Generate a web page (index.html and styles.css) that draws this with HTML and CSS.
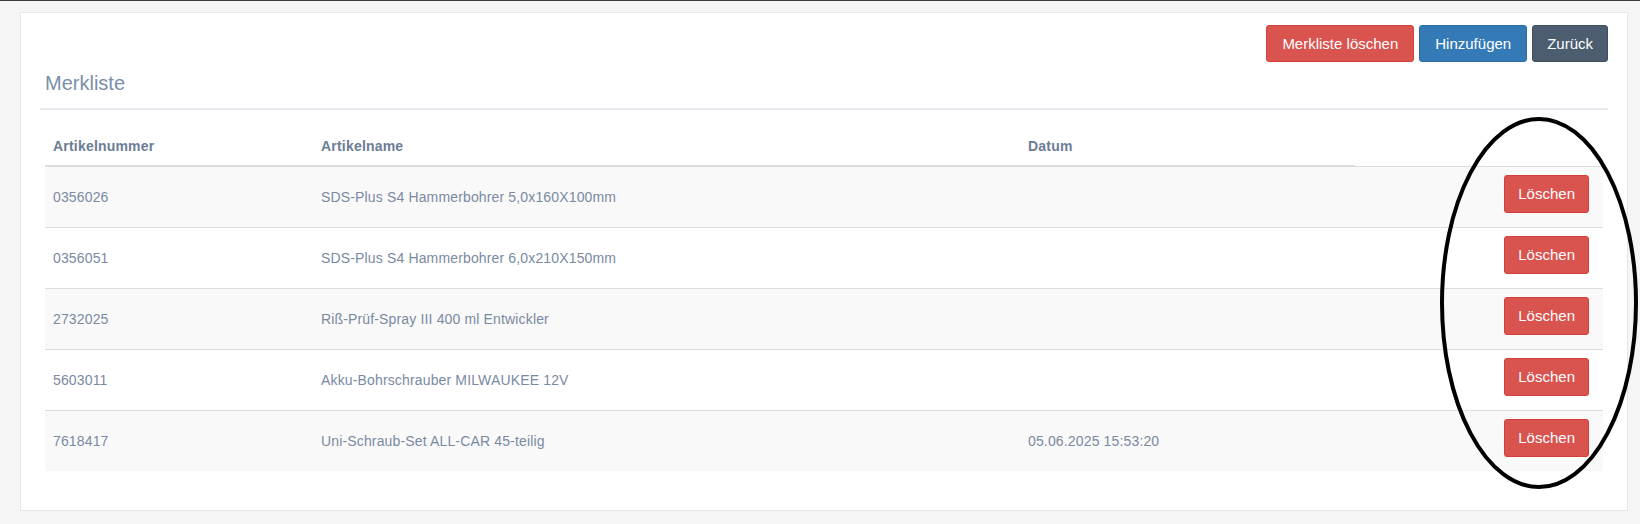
FILE: index.html
```html
<!DOCTYPE html>
<html lang="de">
<head>
<meta charset="utf-8">
<title>Merkliste</title>
<link rel="stylesheet" href="styles.css">
</head>
<body>
<div class="panel">
  <div class="toolbar">
    <button class="btn btn-danger">Merkliste löschen</button>
    <button class="btn btn-primary">Hinzufügen</button>
    <button class="btn btn-dark">Zurück</button>
  </div>
  <h2 class="panel-title">Merkliste</h2>
  <hr class="divider">
  <table class="list">
    <colgroup>
      <col class="col-nr">
      <col class="col-name">
      <col class="col-date">
      <col class="col-action">
    </colgroup>
    <thead>
      <tr>
        <th>Artikelnummer</th>
        <th>Artikelname</th>
        <th>Datum</th>
        <th class="th-empty"></th>
      </tr>
    </thead>
    <tbody>
      <tr>
        <td>0356026</td>
        <td>SDS-Plus S4 Hammerbohrer 5,0x160X100mm</td>
        <td></td>
        <td class="action"><button class="btn btn-danger">Löschen</button></td>
      </tr>
      <tr>
        <td>0356051</td>
        <td>SDS-Plus S4 Hammerbohrer 6,0x210X150mm</td>
        <td></td>
        <td class="action"><button class="btn btn-danger">Löschen</button></td>
      </tr>
      <tr>
        <td>2732025</td>
        <td>Riß-Prüf-Spray III 400 ml Entwickler</td>
        <td></td>
        <td class="action"><button class="btn btn-danger">Löschen</button></td>
      </tr>
      <tr>
        <td>5603011</td>
        <td>Akku-Bohrschrauber MILWAUKEE 12V</td>
        <td></td>
        <td class="action"><button class="btn btn-danger">Löschen</button></td>
      </tr>
      <tr>
        <td>7618417</td>
        <td>Uni-Schraub-Set ALL-CAR 45-teilig</td>
        <td>05.06.2025 15:53:20</td>
        <td class="action"><button class="btn btn-danger">Löschen</button></td>
      </tr>
    </tbody>
  </table>
</div>
<svg class="marker" width="1640" height="524" viewBox="0 0 1640 524">
  <ellipse cx="1539" cy="303" rx="97" ry="184" fill="none" stroke="#000" stroke-width="4"/>
</svg>
</body>
</html>
```
FILE: styles.css
```css
html, body {
  margin: 0;
  padding: 0;
}

body {
  position: relative;
  background: #f5f5f5;
  border-top: 1px solid #3a3a3a;
  font-family: "Liberation Sans", Arial, sans-serif;
  font-size: 14px;
  line-height: 20px;
  color: #7a8aa2;
  height: 523px;
  overflow: hidden;
}

.panel {
  margin: 11px 12px 0 20px;
  background: #fff;
  border: 1px solid #e4e7eb;
  padding: 12px 19px 39px 19px;
}

.toolbar {
  display: flex;
  justify-content: flex-end;
  gap: 5px;
}

.btn {
  display: inline-block;
  vertical-align: top;
  font-family: "Liberation Sans", Arial, sans-serif;
  font-size: 15px;
  line-height: 21px;
  padding: 7px 15px;
  border: 1px solid transparent;
  border-radius: 3px;
  color: #fff;
  cursor: pointer;
}

.btn-danger {
  background: #d9534f;
  border-color: #d43f3a;
}

.btn-primary {
  background: #337ab7;
  border-color: #2e6da4;
}

.btn-dark {
  background: #4b5d6f;
  border-color: #3f4f5f;
  padding-left: 14px;
  padding-right: 14px;
}

.panel-title {
  margin: 9px 0 0 0;
  padding-left: 5px;
  font-size: 20px;
  font-weight: normal;
  line-height: 24px;
  color: #7a8eaa;
}

.divider {
  margin: 13px 0 0 0;
  border: 0;
  border-top: 2px solid #e7eaee;
  height: 0;
}

.list {
  margin: 18px 5px 0 5px;
  width: calc(100% - 10px);
  border-collapse: collapse;
  table-layout: fixed;
}

.col-nr { width: 268px; }
.col-name { width: 707px; }
.col-date { width: 335px; }
.col-action { width: 248px; }

.list th {
  text-align: left;
  font-weight: bold;
  color: #6c7d95;
  letter-spacing: 0.2px;
  padding: 8px 8px 9px 8px;
  border-bottom: 2px solid #dddddd;
}

.list th.th-empty {
  border-bottom: 0;
}

.list td {
  padding: 0 8px;
  border-top: 1px solid #dddddd;
  vertical-align: middle;
  letter-spacing: 0.15px;
  height: 60.4px;
  box-sizing: border-box;
}

.list tbody tr:nth-child(odd) td {
  background: #f9f9f9;
}

.list td.action {
  text-align: right;
  vertical-align: top;
  letter-spacing: 0;
  padding: 8px 14px 14px 8px;
}

.list td.action .btn {
  padding: 7px 13px;
  line-height: 22px;
}

.marker {
  position: absolute;
  left: 0;
  top: -1px;
  pointer-events: none;
}
```
